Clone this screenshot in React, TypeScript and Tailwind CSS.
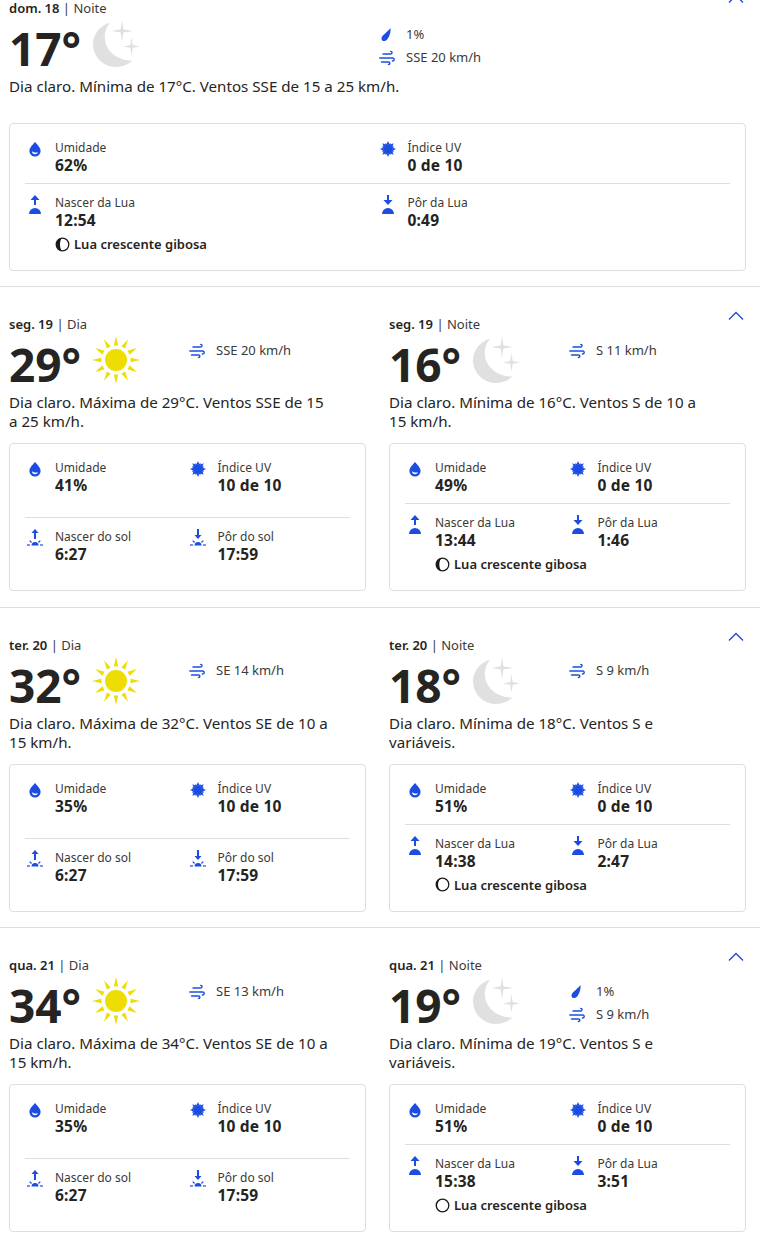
import React from 'react';

const BLUE = '#1b4de4';

const Drop = () => (
  <svg width="20" height="20" viewBox="0 0 20 20" className="shrink-0">
    <path fillRule="evenodd" fill={BLUE} d="M10 3c2.400 3 5.600 5.600 5.600 9a5.600 5.600 0 0 1-11.200 0C4.400 8.600 7.600 6 10 3zM6.900 12.200c.2 1.800 1.300 3 3.200 3 1.500 0 2.600-.8 3-1.900-2.500.6-4.600 0-6.200-1.100z" />
  </svg>
);

const Uv = () => (
  <svg width="20" height="20" viewBox="0 0 20 20" className="shrink-0">
    <g fill={BLUE}>
      <circle cx="10" cy="10" r="4.600" />
      {[0, 45, 90, 135, 180, 225, 270, 315].map((a) => (
        <path key={a} transform={`rotate(${a} 10 10)`} d="M8.300 5.800 L10 2 L11.700 5.800 Z" />
      ))}
      {[22.500, 67.500, 112.500, 157.500, 202.500, 247.500, 292.500, 337.500].map((a) => (
        <path key={a} transform={`rotate(${a} 10 10)`} d="M8.800 5.800 L10 3.400 L11.200 5.800 Z" />
      ))}
    </g>
  </svg>
);

const MoonRise = () => (
  <svg width="20" height="20" viewBox="0 0 20 20" className="shrink-0">
    <path fill={BLUE} d="M4 20a6 6 0 0 1 12 0z" />
    <path fill={BLUE} d="M10 1 L14.500 6 L11 6 L11 11 L9 11 L9 6 L5.500 6 Z" />
  </svg>
);

const MoonSet = () => (
  <svg width="20" height="20" viewBox="0 0 20 20" className="shrink-0">
    <path fill={BLUE} d="M4 20a6 6 0 0 1 12 0z" />
    <path fill={BLUE} d="M10 11 L14.500 6 L11 6 L11 1 L9 1 L9 6 L5.500 6 Z" />
  </svg>
);

const SunBase = () => (
  <g fill={BLUE}>
    <path d="M6.500 17.500a3.500 3.500 0 0 1 7 0z" />
    <rect x="2" y="16.400" width="3" height="1.200" />
    <rect x="15" y="16.400" width="3" height="1.200" />
    <rect x="5" y="12.300" width="1.300" height="2.600" transform="rotate(-45 5.600 13.600)" />
    <rect x="13.700" y="12.300" width="1.300" height="2.600" transform="rotate(45 14.400 13.600)" />
  </g>
);

const SunRise = () => (
  <svg width="20" height="20" viewBox="0 0 20 20" className="shrink-0">
    <SunBase />
    <path fill={BLUE} d="M10 1 L13.500 5 L11 5 L11 11 L9 11 L9 5 L6.500 5 Z" />
  </svg>
);

const SunSet = () => (
  <svg width="20" height="20" viewBox="0 0 20 20" className="shrink-0">
    <SunBase />
    <path fill={BLUE} d="M10 11 L13.500 7 L11 7 L11 1 L9 1 L9 7 L6.500 7 Z" />
  </svg>
);

const Wind = () => (
  <svg width="20" height="20" viewBox="0 0 20 20" className="shrink-0" fill="none" stroke={BLUE} strokeWidth="1.400" strokeLinecap="round">
    <path d="M4 6h7.500c2 0 2-2.600.2-2.600" />
    <path d="M.8 10h12.800c2.200 0 2.200 3-.2 3" />
    <path d="M2.500 14h7c1.800 0 1.800 2.500 0 2.500" />
  </svg>
);

const Rain = () => (
  <svg width="20" height="20" viewBox="0 0 20 20" className="shrink-0">
    <path fill={BLUE} d="M11.500 3c.4 3.400-.6 7.600-2.800 10.700-1.300 1.900-3.600 3.100-5.200 2-1.600-1.200-1.200-3.500.4-5.100C6.500 8 9.500 5.700 11.500 3z" />
  </svg>
);

const Sun = () => (
  <svg width="48" height="48" viewBox="0 0 48 48" className="shrink-0">
    <circle cx="24" cy="24" r="11" fill="#eedd00" />
    {[0, 30, 60, 90, 120, 150, 180, 210, 240, 270, 300, 330].map((a) => (
      <path key={a} transform={`rotate(${a} 24 24)`} fill="#eedd00" d="M21.800 9.500 L24 0 L26.200 9.500 Z" />
    ))}
  </svg>
);

const Moon = () => (
  <svg width="48" height="48" viewBox="0 0 48 48" className="shrink-0">
    <path fill="#e0e0e0" d="M18 2.500C7.500 6 1 14.500 1 24c0 13 10.500 23 23 23 6.500 0 12-2.300 16.500-6.500C27 41 14.500 32 13 20c-.9-6.500 1-12.500 5-17.500z" />
    <path fill="#e0e0e0" d="M30 0l1.300 9.200L40.500 11l-9.200 1.500L30 22l-1.300-9.500L19.500 11l9.200-1.800z" />
    <path fill="#e0e0e0" d="M39.500 17l1.200 8 7.300 1.500-7.300 1.300-1.200 8-1.200-8L31 26.500l7.300-1.500z" />
  </svg>
);

// shade is the x radius of the lit edge: small means a wide dark part
const Phase = ({ shade }: { shade: number }) => (
  <svg width="15" height="15" viewBox="0 0 15 15" className="shrink-0">
    <circle cx="7.500" cy="7.500" r="6.300" fill="#ffffff" stroke="#1a1a1a" strokeWidth="1.300" />
    <path fill="#1a1a1a" d={`M7.500 1.200A6.300 6.300 0 0 0 7.500 13.800A${shade} 6.300 0 0 1 7.500 1.200z`} />
  </svg>
);

const Stat = ({ icon, label, value }: { icon: React.ReactNode; label: string; value: string }) => (
  <div className="flex gap-2.5">
    {icon}
    <div>
      <div className="text-[12px] leading-[17px] text-[#3a3a38]">{label}</div>
      <div className="text-[15.500px] leading-[18px] tracking-[0.2px] font-bold">{value}</div>
    </div>
  </div>
);

type Period = {
  label: string;
  part: string;
  temp: string;
  night: boolean;
  rain?: string;
  wind: string;
  text: string;
  humidity: string;
  uv: string;
  rise: string;
  set: string;
  shade?: number;
};

const Details = ({ p }: { p: Period }) => (
  <div className="border border-[#dedede] rounded-[4px] px-[15px] pt-[15px] h-[148px]">
    <div className={`grid grid-cols-2 border-b border-[#dedede] ${p.night ? 'h-[45px]' : 'h-[59px]'}`}>
      <Stat icon={<Drop />} label="Umidade" value={p.humidity} />
      <Stat icon={<Uv />} label="Índice UV" value={p.uv} />
    </div>
    <div className="grid grid-cols-2 pt-[10px]">
      <Stat icon={p.night ? <MoonRise /> : <SunRise />} label={p.night ? 'Nascer da Lua' : 'Nascer do sol'} value={p.rise} />
      <Stat icon={p.night ? <MoonSet /> : <SunSet />} label={p.night ? 'Pôr da Lua' : 'Pôr do sol'} value={p.set} />
    </div>
    {p.night && (
      <div className="flex items-center gap-1 pl-[30px] mt-[6px] text-[13px] leading-[18px] font-semibold">
        <Phase shade={p.shade ?? 6} />
        <span>Lua crescente gibosa</span>
      </div>
    )}
  </div>
);

const Head = ({ p, split }: { p: Period; split: string }) => (
  <>
    <div className="text-[13px] leading-[18px] text-[#3a3a38] whitespace-pre">
      <span className="font-semibold text-[#252422]">{p.label}</span>
      {' | '}
      {p.part}
    </div>
    <div className="flex items-start h-[57px]">
      <div className={`flex items-start shrink-0 ${split}`}>
        <span className="text-[46px] leading-[48px] font-bold w-[83px] mt-[7px]">{p.temp}</span>
        <div className="mt-[3px]">{p.night ? <Moon /> : <Sun />}</div>
      </div>
      <div className="pt-[6px] text-[13px] text-[#3a3a38]">
        {p.rain && (
          <div className="flex items-center gap-[7px] h-[23px]">
            <Rain />
            <span>{p.rain}</span>
          </div>
        )}
        <div className="flex items-center gap-[7px] h-[23px]">
          <Wind />
          <span>{p.wind}</span>
        </div>
      </div>
    </div>
  </>
);

const Column = ({ p }: { p: Period }) => (
  <div>
    <Head p={p} split="w-[180px]" />
    <p className="text-[15.150px] leading-[19px] mt-[3px] h-[38px] max-w-[324px]">{p.text}</p>
    <div className="mt-[12px]">
      <Details p={p} />
    </div>
  </div>
);

const Chevron = ({ top }: { top: string }) => (
  <svg width="16" height="10" viewBox="0 0 16 10" className={`absolute right-[16px] ${top}`} fill="none" stroke={BLUE} strokeWidth="1.400">
    <path d="M1 8.500 8 1.500l7 7" />
  </svg>
);

const first: Period = {
  label: 'dom. 18', part: 'Noite', temp: '17°', night: true, rain: '1%', wind: 'SSE 20 km/h',
  text: 'Dia claro. Mínima de 17°C. Ventos SSE de 15 a 25 km/h.',
  humidity: '62%', uv: '0 de 10', rise: '12:54', set: '0:49', shade: 2.500,
};

const days: [Period, Period][] = [
  [
    { label: 'seg. 19', part: 'Dia', temp: '29°', night: false, wind: 'SSE 20 km/h', text: 'Dia claro. Máxima de 29°C. Ventos SSE de 15 a 25 km/h.', humidity: '41%', uv: '10 de 10', rise: '6:27', set: '17:59' },
    { label: 'seg. 19', part: 'Noite', temp: '16°', night: true, wind: 'S 11 km/h', text: 'Dia claro. Mínima de 16°C. Ventos S de 10 a 15 km/h.', humidity: '49%', uv: '0 de 10', rise: '13:44', set: '1:46', shade: 3.200 },
  ],
  [
    { label: 'ter. 20', part: 'Dia', temp: '32°', night: false, wind: 'SE 14 km/h', text: 'Dia claro. Máxima de 32°C. Ventos SE de 10 a 15 km/h.', humidity: '35%', uv: '10 de 10', rise: '6:27', set: '17:59' },
    { label: 'ter. 20', part: 'Noite', temp: '18°', night: true, wind: 'S 9 km/h', text: 'Dia claro. Mínima de 18°C. Ventos S e variáveis.', humidity: '51%', uv: '0 de 10', rise: '14:38', set: '2:47', shade: 4.500 },
  ],
  [
    { label: 'qua. 21', part: 'Dia', temp: '34°', night: false, wind: 'SE 13 km/h', text: 'Dia claro. Máxima de 34°C. Ventos SE de 10 a 15 km/h.', humidity: '35%', uv: '10 de 10', rise: '6:27', set: '17:59' },
    { label: 'qua. 21', part: 'Noite', temp: '19°', night: true, rain: '1%', wind: 'S 9 km/h', text: 'Dia claro. Mínima de 19°C. Ventos S e variáveis.', humidity: '51%', uv: '0 de 10', rise: '15:38', set: '3:51', shade: 5.600 },
  ],
];

export default function App() {
  return (
    <div className="w-[760px] h-[1248px] overflow-hidden bg-white text-[#252422] font-['Noto_Sans',sans-serif]">
      <section className="relative h-[288px] border-b border-[#dedede] pl-[9px] pr-[14px] -mt-[1px]">
        <Chevron top="top-[-5px]" />
        <Head p={first} split="w-[370px]" />
        <p className="text-[15.150px] leading-[19px] mt-[3px]">{first.text}</p>
        <div className="mt-[27px]">
          <Details p={first} />
        </div>
      </section>
      {days.map(([day, night]) => (
        <section key={day.label} className="relative h-[320.500px] border-b border-[#dedede] pl-[9px] pr-[14px] pt-[28px]">
          <Chevron top="top-[24px]" />
          <div className="grid grid-cols-2 gap-x-[23px]">
            <Column p={day} />
            <Column p={night} />
          </div>
        </section>
      ))}
    </div>
  );
}
